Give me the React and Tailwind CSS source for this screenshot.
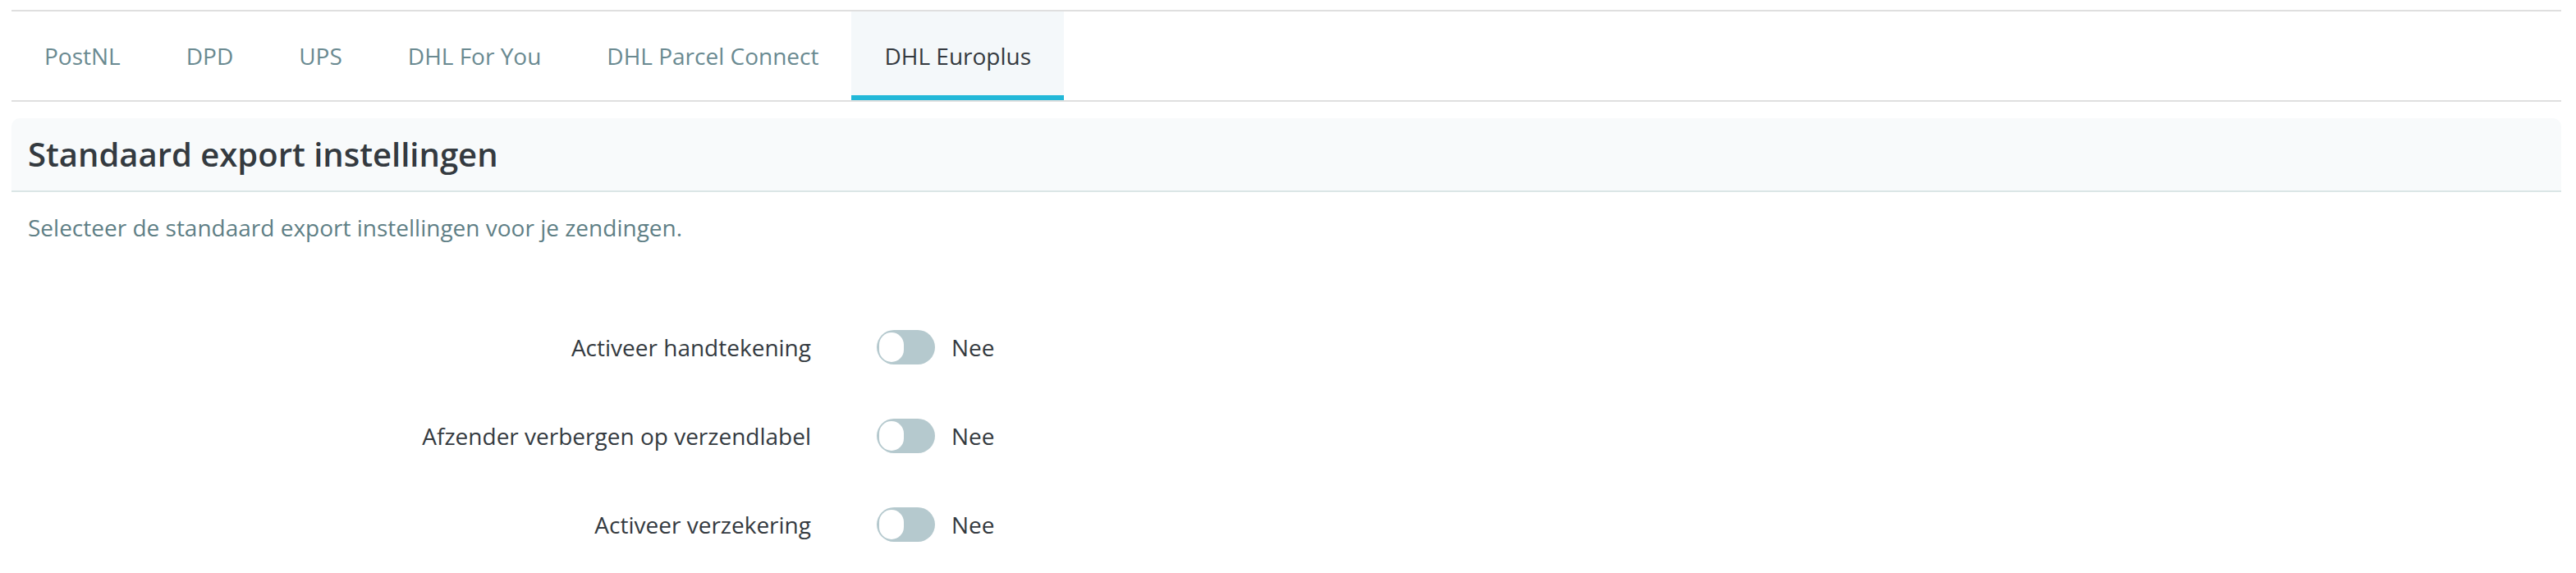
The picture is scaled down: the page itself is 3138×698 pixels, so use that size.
import React, { useState } from 'react';

const carriers = ['PostNL', 'DPD', 'UPS', 'DHL For You', 'DHL Parcel Connect', 'DHL Europlus'];

const settings = [
    { id: 'signature', label: 'Activeer handtekening' },
    { id: 'hideSender', label: 'Afzender verbergen op verzendlabel' },
    { id: 'insurance', label: 'Activeer verzekering' },
];

const Toggle = ({ checked, onChange }) => (
    <button
        type="button"
        onClick={onChange}
        className={`relative w-[71px] h-[42px] rounded-full shrink-0 transition-colors ${checked ? 'bg-[#22b8d8]' : 'bg-[#b5c9ce]'}`}
    >
        <span
            className={`absolute top-[3px] w-[30px] h-[36px] rounded-full bg-white transition-all ${checked ? 'left-[38px]' : 'left-[3px]'}`}
        />
    </button>
);

const App = () => {
    const [active, setActive] = useState('DHL Europlus');
    const [values, setValues] = useState({ signature: false, hideSender: false, insurance: false });

    return (
        <div className="min-h-screen bg-white pt-[12px] pl-[14px] pr-[18px] font-['Open_Sans',sans-serif]">
            {/* Carrier tabs */}
            <div className="flex border-y-2 border-[#dfdfdf]">
                {carriers.map((name) => (
                    <button
                        key={name}
                        onClick={() => setActive(name)}
                        className={`h-[108px] px-[40px] pt-[6px] text-[28px] border-b-[6px] ${active === name ? 'bg-[#f4f8fa] text-[#343a40] border-[#22b8d8]' : 'text-[#6a8a91] border-transparent'}`}
                    >
                        {name}
                    </button>
                ))}
            </div>

            {/* Export settings */}
            <div className="mt-[20px]">
                <div className="h-[90px] flex items-center px-[20px] bg-[#f8fafb] rounded-t-[10px] border-b-2 border-[#dbe6e6]">
                    <h2 className="text-[40px] font-semibold text-[#343a40]">Standaard export instellingen</h2>
                </div>
                <p className="px-[20px] pt-[22px] text-[28px] text-[#5f7f86]">
                    Selecteer de standaard export instellingen voor je zendingen.
                </p>

                <div className="mt-[104px] flex flex-col gap-[66px]">
                    {settings.map((s) => (
                        <div key={s.id} className="flex items-center">
                            <label className="w-[974px] text-right text-[28px] text-[#343a40]">{s.label}</label>
                            <div className="ml-[80px] flex items-center gap-[20px]">
                                <Toggle
                                    checked={values[s.id]}
                                    onChange={() => setValues({ ...values, [s.id]: !values[s.id] })}
                                />
                                <span className="text-[28px] text-[#343a40]">{values[s.id] ? 'Ja' : 'Nee'}</span>
                            </div>
                        </div>
                    ))}
                </div>
            </div>
        </div>
    );
};

export default App;
